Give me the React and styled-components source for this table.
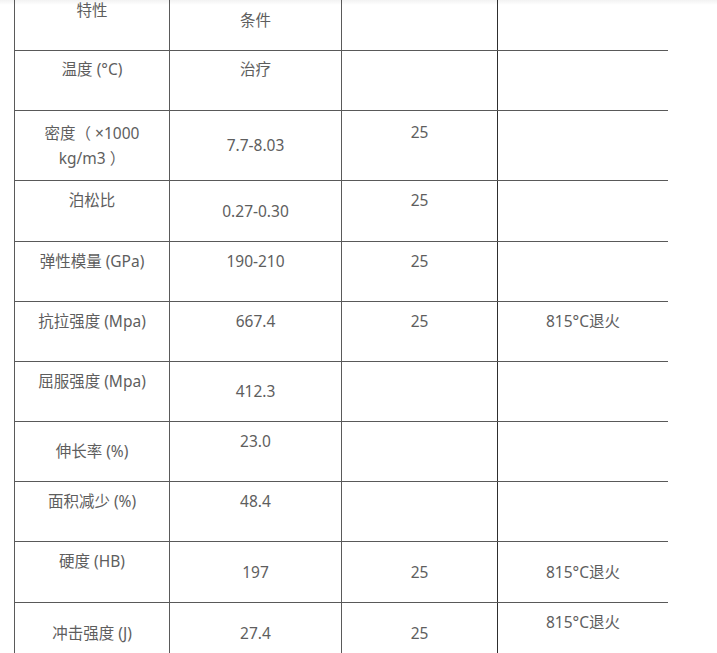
import React from "react";
import styled, { createGlobalStyle } from "styled-components";

const GlobalStyle = createGlobalStyle`
  html, body {
    margin: 0;
    padding: 0;
    background: #ffffff;
    overflow: hidden;
  }
  body {
    font-family: "Noto Sans", "Noto Sans CJK SC", sans-serif;
  }
`;

const Page = styled.div`
  position: relative;
  width: 717px;
  height: 653px;
  overflow: hidden;
  background: #fff;
`;

const TopShade = styled.div`
  position: absolute;
  left: 0;
  right: 0;
  top: 0;
  height: 5px;
  background: linear-gradient(to bottom, rgba(0, 0, 0, 0.05), rgba(0, 0, 0, 0));
  pointer-events: none;
`;

const Table = styled.div`
  margin-top: -9px;
  margin-left: 14px;
  width: 654px;
  display: flex;
  flex-direction: column;
`;

const Row = styled.div`
  display: grid;
  grid-template-columns: 155px 172px 156px 171px;
  height: ${(p) => p.$h}px;
  border-bottom: ${(p) => (p.$last ? "none" : "1px solid #595959")};
  box-sizing: border-box;
`;

const Cell = styled.div`
  box-sizing: border-box;
  border-left: 1px solid ${(p) => (p.$dark ? "#2e2e2e" : "#5a5a5a")};
  display: flex;
  flex-direction: column;
  align-items: center;
  justify-content: ${(p) => (p.$v === "m" ? "center" : "flex-start")};
  padding-top: ${(p) => (p.$v === "m" ? 0 : p.$pt || 7)}px;
  font-size: 15.5px;
  line-height: 25px;
  color: #5e5e5e;
  text-align: center;
  white-space: nowrap;
`;

const rows = [
  { h: 60, cells: [["特性", "t"], ["条件", "m"], ["", "t"], ["", "t"]] },
  { h: 60, cells: [["温度 (°C)", "t", 6], ["治疗", "t", 6], ["", "t"], ["", "t"]] },
  {
    h: 70,
    cells: [
      [["密度（ ×1000", "kg/m3 ）"], "m"],
      ["7.7-8.03", "m"],
      ["25", "t", 9],
      ["", "t"],
    ],
  },
  { h: 61, cells: [["泊松比", "t"], ["0.27-0.30", "m"], ["25", "t"], ["", "t"]] },
  { h: 60, cells: [["弹性模量 (GPa)", "t"], ["190-210", "t"], ["25", "t"], ["", "t"]] },
  { h: 60, cells: [["抗拉强度 (Mpa)", "t"], ["667.4", "t"], ["25", "t"], ["815°C退火", "t"]] },
  { h: 60, cells: [["屈服强度 (Mpa)", "t"], ["412.3", "m"], ["", "t"], ["", "t"]] },
  { h: 60, cells: [["伸长率 (%)", "m"], ["23.0", "t"], ["", "t"], ["", "t"]] },
  { h: 60, cells: [["面积减少 (%)", "t"], ["48.4", "t"], ["", "t"], ["", "t"]] },
  { h: 61, cells: [["硬度 (HB)", "t"], ["197", "m"], ["25", "m"], ["815°C退火", "m"]] },
  { h: 60, last: true, cells: [["冲击强度 (J)", "m"], ["27.4", "m"], ["25", "m"], ["815°C退火", "t"]] },
];

export default function App() {
  return (
    <>
      <GlobalStyle />
      <Page>
        <Table>
          {rows.map((r, i) => (
            <Row key={i} $h={r.h} $last={r.last}>
              {r.cells.map(([text, v, pt], j) => (
                <Cell key={j} $v={v} $pt={pt} $dark={j === 3}>
                  {Array.isArray(text)
                    ? text.map((t, k) => <span key={k}>{t}</span>)
                    : text}
                </Cell>
              ))}
            </Row>
          ))}
        </Table>
        <TopShade />
      </Page>
    </>
  );
}
